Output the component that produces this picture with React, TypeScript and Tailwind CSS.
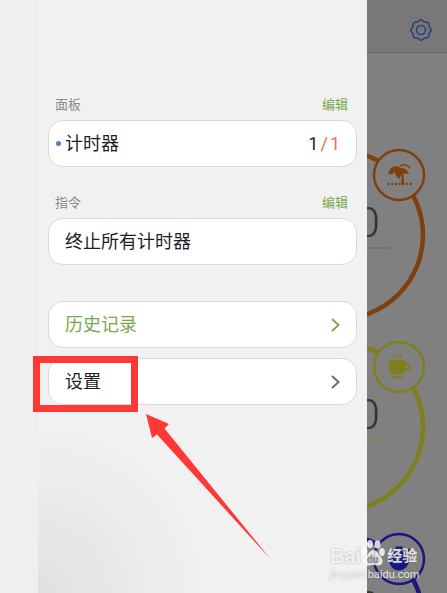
import type { ReactNode } from "react";

type BadgeIcon = "beach" | "coffee" | "stopwatch";

interface Timer {
  id: number;
  color: string;
  icon: BadgeIcon;
}

const timers: Timer[] = [
  { id: 1, color: "#7f400f", icon: "beach" },
  { id: 2, color: "#7f7f1c", icon: "coffee" },
  { id: 3, color: "#17177f", icon: "stopwatch" },
];

// eight soft teeth around the centre of a 24px box
const gearPoints = Array.from({ length: 96 }, (_, i) => {
  const a = (i * Math.PI) / 48;
  const r = 9.5 + 0.6 * Math.cos(8 * a);
  return `${(12 + r * Math.cos(a)).toFixed(2)},${(12 + r * Math.sin(a)).toFixed(2)}`;
}).join(" ");

function GearIcon() {
  return (
    <svg viewBox="0 0 24 24" className="h-6 w-6" fill="none" stroke="#27427c" strokeWidth="1.6">
      <polygon points={gearPoints} strokeLinejoin="round" />
      <circle cx="12" cy="12" r="4.5" />
    </svg>
  );
}

function Chevron() {
  return (
    <svg viewBox="0 0 9 14" className="h-[14px] w-[9px]" fill="none" stroke="currentColor" strokeWidth="1.8">
      <path d="M1 1l6.6 6L1 13" />
    </svg>
  );
}

function BadgeGlyph({ icon }: { icon: BadgeIcon }) {
  if (icon === "beach") {
    return (
      <>
        <path d="M-10.500-.5C-10.500-5-7.500-8.500-3.500-8.700-1.500-8.700 0-8 .8-7.200 3-6.800 8-7 10-1 8.500-1.500 6.500-1.800 4.800-1.400 3-1.200 1.500 1 .5 4-2 2.500-4.200.5-4-3-5.500-2.600-6.500-1.800-7-.4-8-1-9.500-.9-10.500-.5z" />
        <path d="M.5-8.800C4-11.300 9-10.300 11-6.800" fill="none" stroke="currentColor" strokeWidth="1.600" />
        <path d="M2.800-2L4.300-2 5.200 9H2.200z" />
        <path d="M-10.500 9h24" fill="none" stroke="currentColor" strokeWidth="2.400" strokeLinecap="round" strokeDasharray="0 3.700" />
      </>
    );
  }
  if (icon === "coffee") {
    return (
      <>
        <path d="M-10.300-7H6.500V2C6.500 5 4.500 7 1.500 7h-7c-3 0-4.800-2-4.800-5z" />
        <circle cx="7.800" cy="0" r="2.900" fill="none" stroke="currentColor" strokeWidth="2" />
        <path d="M-8 9.300H4.500C4 11 3 11.700 1.500 11.700h-6.500C-6.500 11.700-7.500 11-8 9.300z" />
        <path d="M-2.500-9c0-1.500-1.500-1.500-1-3.500M1.800-9c0-1.500-1.500-1.500-1-3.500" fill="none" stroke="currentColor" strokeWidth="2.200" />
      </>
    );
  }
  return (
    <>
      <circle cx="0" cy="1.500" r="10" />
      <path d="M-3.500-12.500h7v3h-7zM7.500-9.500l1.800-1.600 2.600 2.800L10-6.700z" />
      <path d="M0 1.500V-5" fill="none" stroke="#808080" strokeWidth="1.500" />
    </>
  );
}

function TimerDial({ timer }: { timer: Timer }) {
  return (
    <svg
      viewBox="0 0 80 192"
      className="block h-[192px] w-20"
      style={{ color: timer.color }}
      fill="currentColor"
    >
      <circle cx="-28" cy="96" r="84" fill="none" stroke="currentColor" strokeWidth="4.500" />
      <path d="M0 109h23" stroke="currentColor" strokeWidth="1" opacity="0.5" />
      <text x="-11" y="98" fontSize="43" fontWeight="300" fill="#333333" fontFamily='"Roboto", sans-serif'>
        0
      </text>
      <circle cx="32" cy="36" r="25" fill="#808080" stroke="currentColor" strokeWidth="2.500" />
      <g transform="translate(32 36)">
        <BadgeGlyph icon={timer.icon} />
      </g>
    </svg>
  );
}

function Section({ title, children }: { title: string; children: ReactNode }) {
  return (
    <section className="mb-[26px]">
      <div className="mb-[5px] flex h-5 items-center justify-between pl-[7px] pr-[9px] text-[13px] leading-5">
        <h2 className="text-[#8b8b8b]">{title}</h2>
        <button type="button" className="text-[#76a94c]">
          编辑
        </button>
      </div>
      {children}
    </section>
  );
}

const card =
  "flex h-[47px] w-full items-center rounded-[15px] border border-[#dadada] bg-white text-left text-lg";

function Callout() {
  return (
    <>
      <div className="pointer-events-none absolute -left-[15px] -top-[2px] h-14 w-[105px] border-[7px] border-[#fd3837]" />
      <svg
        viewBox="0 0 124 145"
        className="pointer-events-none absolute left-[98px] top-14 h-[145px] w-[124px]"
        fill="#fd3837"
      >
        <path d="M0 0L23 10L18.500 14.500L124 144.500L11 20.500L6 24z" />
      </svg>
    </>
  );
}

function Watermark() {
  return (
    <div className="pointer-events-none absolute bottom-[10px] right-[27px] w-[90px] text-white/80 [text-shadow:0_0_2px_rgba(100,100,100,0.5)]">
      <div className="flex h-7 items-end">
        <span className='font-["Liberation_Sans",sans-serif] text-[20px] font-bold leading-[22px]'>Bai</span>
        <svg viewBox="0 0 24 28" className="h-7 w-6 shrink-0" fill="currentColor">
          <ellipse cx="3.500" cy="12" rx="3" ry="4" />
          <ellipse cx="9" cy="5" rx="3" ry="4" />
          <ellipse cx="16.500" cy="5.500" rx="3" ry="4" />
          <ellipse cx="21" cy="13" rx="2.800" ry="4" />
          <path d="M12.500 11c3.500 0 4.500 4 7 6.500 3.500 3.500 2.500 9-2 9-2.500 0-3-.6-5-.6s-3 .6-5.500.6c-4.500 0-5.500-5.500-2-9C7.500 15 9 11 12.500 11z" />
          <text x="6" y="24" fontSize="10" fontWeight="bold" fill="#8a8a8a">
            du
          </text>
        </svg>
        <span className="ml-[2px] whitespace-nowrap text-[15px] font-bold leading-[22px]">经验</span>
      </div>
      <div className="text-[11px] leading-4">jingyan.baidu.com</div>
    </div>
  );
}

export default function App() {
  return (
    <div className='relative flex h-screen overflow-hidden bg-[#efefef] font-["Roboto","Noto_Sans_CJK_SC",sans-serif] text-[#1f1f1f]'>
      <aside className="ml-[38px] flex-1 bg-[#f1f1f1] bg-[radial-gradient(circle_at_bottom_left,#e1e1e1,#f1f1f1_170px)] px-[10px] pt-[95px]">
        <Section title="面板">
          <button type="button" className={`${card} gap-1 pl-[7px] pr-4`}>
            <span className="h-[5px] w-[5px] rounded-full bg-[#4a7bd0]" />
            <span className="flex-1">计时器</span>
            <span className="flex gap-[2px]">
              <span>1</span>
              <span className="text-[#ee6a68]">/</span>
              <span className="text-[#ee6a68]">1</span>
            </span>
          </button>
        </Section>

        <Section title="指令">
          <button type="button" className={`${card} px-4`}>
            终止所有计时器
          </button>
        </Section>

        <nav className="mt-9 flex flex-col gap-[10px]">
          <button type="button" className={`${card} justify-between px-4 text-[#76a94c]`}>
            历史记录
            <Chevron />
          </button>
          <div className="relative">
            <button type="button" className={`${card} justify-between px-4`}>
              设置
              <span className="text-[#666666]">
                <Chevron />
              </span>
            </button>
            <Callout />
          </div>
        </nav>
      </aside>

      <main className="w-20 shrink-0 overflow-hidden bg-[#808080]">
        <header className="flex h-[53px] items-center justify-end border-b border-[#666666] bg-[#787878] pr-[14px] pt-2">
          <button type="button" aria-label="设置">
            <GearIcon />
          </button>
        </header>
        <div className="pt-[86px]">
          {timers.map((t) => (
            <TimerDial key={t.id} timer={t} />
          ))}
        </div>
      </main>

      <Watermark />
    </div>
  );
}
